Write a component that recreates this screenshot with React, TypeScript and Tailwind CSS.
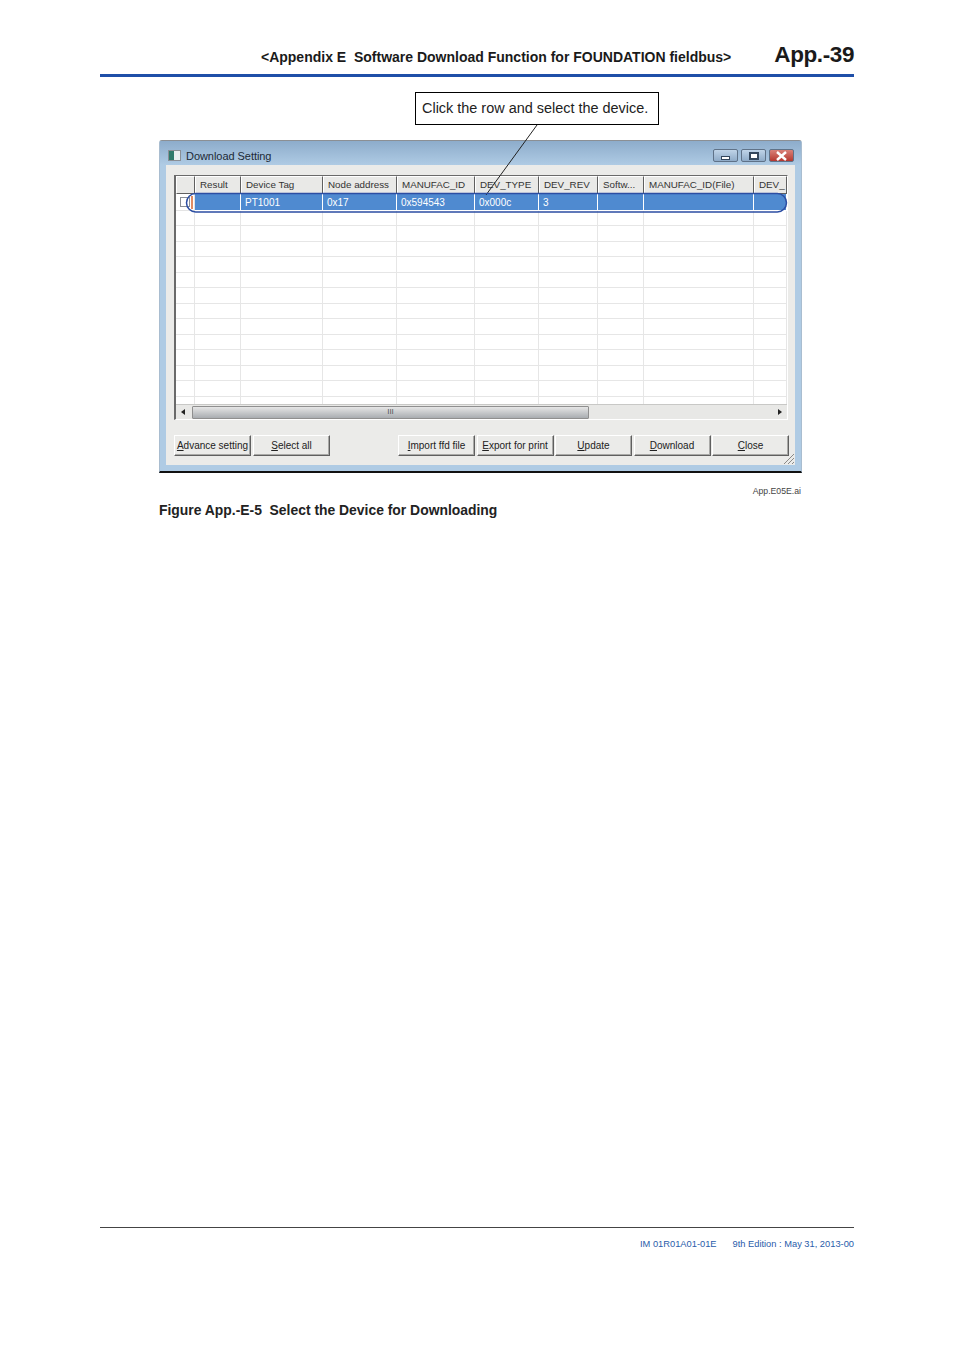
import React from 'react';

const columns = [
  { title: '', width: 19 },
  { title: 'Result', width: 46 },
  { title: 'Device Tag', width: 82 },
  { title: 'Node address', width: 74 },
  { title: 'MANUFAC_ID', width: 78 },
  { title: 'DEV_TYPE', width: 64 },
  { title: 'DEV_REV', width: 59 },
  { title: 'Softw...', width: 46 },
  { title: 'MANUFAC_ID(File)', width: 110 },
  { title: 'DEV_', width: 33 },
];

const selectedRow = ['', '', 'PT1001', '0x17', '0x594543', '0x000c', '3', '', '', ''];
const emptyRows = Array.from({ length: 13 }, (_, i) => i);

const DialogButton: React.FC<{ width: string; children: React.ReactNode }> = ({ width, children }) => (
  <button className={`${width} h-[21px] shrink-0 bg-[#ebebe9] border border-t-white border-l-white border-r-[#5f5f5f] border-b-[#5f5f5f] shadow-[inset_-1px_-1px_0_#a9a9a7] text-[10px] leading-[19px] text-[#222] whitespace-nowrap text-center`}>
    {children}
  </button>
);

const CaptionButton: React.FC<{ width: string; close?: boolean; children: React.ReactNode }> = ({ width, close, children }) => (
  <div className={`${width} h-[13px] flex items-center justify-center rounded-[2px] border border-[#5f7288] ${close ? 'bg-gradient-to-b from-[#d98078] to-[#b5372f]' : 'bg-gradient-to-b from-[#c0d4e8] to-[#8fabc8]'}`}>
    {children}
  </div>
);

const App: React.FC = () => {
  return (
    <div className="relative flex flex-col w-[954px] h-[1350px] bg-white font-['Liberation_Sans',Arial,sans-serif] overflow-hidden">
      <header className="mx-[100px] h-[77px] border-b-[3px] border-[#1f4fa8] flex items-end justify-end pb-[5px] text-[#1a1a1a]">
        <span className="text-[14px] font-bold leading-[18px] mb-[3px] mr-[43px] whitespace-pre">{'<Appendix E  Software Download Function for FOUNDATION fieldbus>'}</span>
        <span className="text-[22.5px] font-bold leading-[28px] tracking-[-0.4px]">App.-39</span>
      </header>

      <div className="mt-[15px] ml-[415px] w-[244px] h-[33px] border border-black flex items-center pl-[6px] text-[14.45px] text-[#222] whitespace-nowrap">
        Click the row and select the device.
      </div>

      {/* dialog */}
      <div className="mt-[15px] ml-[159px] w-[643px] h-[333px] flex flex-col bg-[#afcbe4] border-t border-t-[#8b8f94] border-x border-x-[#a9bdd0] border-b-2 border-b-[#111] rounded-t-[3px]">
        <div className="h-[24px] shrink-0 flex items-center pt-[5px] pl-[8px] pr-[7px] bg-gradient-to-b from-[#8daccb] to-[#afcbe4]">
          <div className="relative w-[13px] h-[11px] mr-[5px] border border-[#8a8f96] bg-[#e8eef0]">
            <div className="w-[5px] h-full bg-[#2f7a6c]" />
          </div>
          <span className="mt-[1px] text-[11px] text-[#1c2a36] tracking-[-0.05px]">Download Setting</span>
          <div className="ml-auto flex gap-[3px]">
            <CaptionButton width="w-[25px]"><div className="w-[9px] h-[4px] mt-[4px] bg-white border border-[#33465c]" /></CaptionButton>
            <CaptionButton width="w-[25px]"><div className="w-[10px] h-[8px] bg-white border-2 border-[#33465c]" /></CaptionButton>
            <CaptionButton width="w-[25px]" close>
              <svg width="13" height="10" viewBox="0 0 13 10"><path d="M2 1 L11 9 M11 1 L2 9" stroke="#fff" strokeWidth="2.4" /></svg>
            </CaptionButton>
          </div>
        </div>

        <div className="relative mx-[6px] h-[300px] bg-[#ebebe9] pt-[10px] pl-[8px]">
          {/* table */}
          <div className="w-[614px] h-[245px] flex flex-col border-l-2 border-t border-[#6a6a6a] border-r border-r-white border-b border-b-white">
            <div className="flex h-[18px] shrink-0">
              {columns.map((col, i) => (
                <div key={i} style={{ width: col.width }} className="shrink-0 h-[18px] bg-[#e9e9e7] border-t border-l border-t-white border-l-white border-r border-b border-r-[#5f5f5f] border-b-[#5f5f5f] pl-[4px] text-[9.8px] leading-[16px] text-[#333] overflow-hidden whitespace-nowrap">
                  {col.title}
                </div>
              ))}
            </div>
            <div className="h-[211px] bg-white overflow-hidden">
              <div className="flex h-[16.5px]">
                {selectedRow.map((cell, i) => (
                  <div key={i} style={{ width: columns[i].width }} className={`shrink-0 border-r border-b pl-[4px] text-[10px] leading-[17px] text-white overflow-hidden ${i === 0 ? 'bg-white border-[#e4e4e4]' : 'bg-[#4f8ad0] border-white'}`}>
                    {i === 0 ? <div className="w-[10px] h-[10px] mt-[3px] border border-[#8a8f96] bg-white" /> : cell}
                  </div>
                ))}
              </div>
              {emptyRows.map(row => (
                <div key={row} className="flex h-[15.5px]">
                  {columns.map((col, i) => (
                    <div key={i} style={{ width: col.width }} className="shrink-0 border-r border-b border-[#e6e6e6]" />
                  ))}
                </div>
              ))}
            </div>
            {/* scrollbar */}
            <div className="h-[15px] shrink-0 flex items-center bg-[#e8e8e6] border-t border-[#c8c8c6]">
              <div className="w-[16px] flex justify-center pr-[2px]"><div className="border-y-[3px] border-y-transparent border-r-[4px] border-r-[#222]" /></div>
              <div className="w-[397px] h-[13px] flex items-center justify-center border border-[#8f8f8f] rounded-[1px] bg-gradient-to-b from-[#e6e6e6] to-[#a9adb1] text-[8px] leading-none text-[#555]">III</div>
              <div className="ml-auto w-[16px] flex justify-center pl-[2px]"><div className="border-y-[3px] border-y-transparent border-l-[4px] border-l-[#222]" /></div>
            </div>
          </div>

          {/* buttons */}
          <div className="flex mt-[15px]">
            <div className="flex gap-[2px]">
              <DialogButton width="w-[77px]"><u>A</u>dvance setting</DialogButton>
              <DialogButton width="w-[77px]"><u>S</u>elect all</DialogButton>
            </div>
            <div className="flex gap-[1.5px] ml-[68px]">
              <DialogButton width="w-[77px]"><u>I</u>mport ffd file</DialogButton>
              <DialogButton width="w-[77px]"><u>E</u>xport for print</DialogButton>
              <DialogButton width="w-[77px]"><u>U</u>pdate</DialogButton>
              <DialogButton width="w-[77px]"><u>D</u>ownload</DialogButton>
              <DialogButton width="w-[77px]"><u>C</u>lose</DialogButton>
            </div>
          </div>

          <svg className="absolute right-0 bottom-0" width="12" height="12" viewBox="0 0 12 12">
            <path d="M1 11 L11 1 M5 11 L11 5 M9 11 L11 9" stroke="#8a8a88" strokeWidth="1" />
          </svg>
        </div>
      </div>

      <div className="mt-[13px] mr-[153px] text-right text-[8.7px] leading-[10px] text-[#444]">App.E05E.ai</div>
      <div className="mt-[5px] ml-[159px] text-[13.9px] font-bold leading-[18px] text-[#222] whitespace-pre">{'Figure App.-E-5  Select the Device for Downloading'}</div>

      <footer className="mt-auto mb-[100px] mx-[100px] h-[23px] border-t border-[#444] flex items-end justify-end text-[9.3px] leading-[11px] text-[#2a5caa]">
        <span className="mr-[16px]">IM 01R01A01-01E</span>
        <span>9th Edition : May 31, 2013-00</span>
      </footer>

      {/* callout leader and highlight drawn over the dialog */}
      <svg className="absolute left-0 top-0 pointer-events-none" width="954" height="480" viewBox="0 0 954 480">
        <path d="M537 125 L486 195" stroke="#222" strokeWidth="1" fill="none" />
        <rect x="186.5" y="193.5" width="600" height="18.5" rx="9.2" stroke="#2c4ea3" strokeWidth="1.5" fill="none" />
        <path d="M192 196 V209" stroke="#d8662f" strokeWidth="1.5" />
      </svg>
    </div>
  );
};

export default App;
